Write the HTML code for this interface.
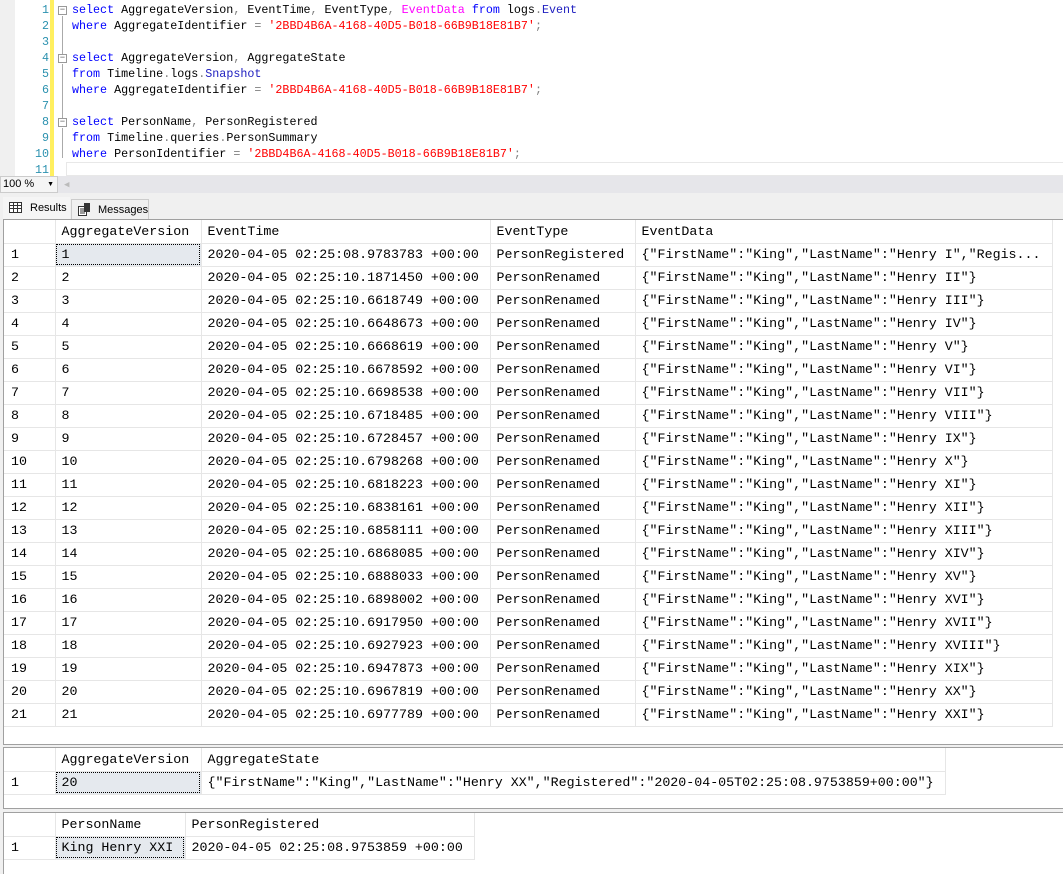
<!DOCTYPE html>
<html><head><meta charset="utf-8"><style>
*{margin:0;padding:0;box-sizing:border-box}
body{width:1063px;height:874px;background:#f0f0f0;position:relative;overflow:hidden;font-family:"Liberation Mono",monospace}
.ed{position:absolute;left:0;top:0;width:1063px;height:176px;background:#fff}
.gut{position:absolute;left:0;top:0;width:15px;height:176px;background:#f0f0f0}
.yb{position:absolute;left:50px;top:0;width:4px;height:176px;background:#ffef5f}
.ln{position:absolute;left:0;width:49px;text-align:right;color:#2b91af;font-size:11.7px;line-height:16px}
.cl{position:absolute;left:72px;font-size:11.7px;line-height:16px;white-space:pre;color:#000}
.k{color:#0000ff}.s{color:#ff0000}.m{color:#ff00ff}.g{color:#808080}.t{color:#2020c0}
.fold{position:absolute;left:58px;width:9px;height:9px;border:1px solid #999;background:#fff;font-size:9px;line-height:7px;text-align:center;color:#555}
.vl{position:absolute;left:62px;width:1px;background:#aaa}
.grid{position:absolute;left:3px;background:#fff;border:1px solid #a0a0a0;border-right:none}
table{border-collapse:collapse;table-layout:fixed;font-size:13.3px}
td{height:23px;border:1px solid #e6e6e6;padding:0 0 0 6px;white-space:nowrap;overflow:hidden;color:#000}
td.n{padding-left:7px}
td.sel{background:#e5e9ee;outline:1px dotted #000;outline-offset:-2px}
tr:first-child td{border-top:none}
td:first-child{border-left:none}
</style></head><body>
<div class="ed">
<div class="gut"></div><div class="yb"></div>
<div style="position:absolute;left:66px;top:162px;width:997px;height:14px;border:1px solid #e8e8e8;border-right:none"></div>
<div class="ln" style="top:2px">1</div><div class="ln" style="top:18px">2</div><div class="ln" style="top:34px">3</div><div class="ln" style="top:50px">4</div><div class="ln" style="top:66px">5</div><div class="ln" style="top:82px">6</div><div class="ln" style="top:98px">7</div><div class="ln" style="top:114px">8</div><div class="ln" style="top:130px">9</div><div class="ln" style="top:146px">10</div><div class="ln" style="top:162px">11</div>
<div class="fold" style="top:6px">−</div><div class="vl" style="top:16px;height:40px"></div>
<div class="fold" style="top:54px">−</div><div class="vl" style="top:64px;height:56px"></div>
<div class="fold" style="top:118px">−</div><div class="vl" style="top:128px;height:30px"></div>
<div class="cl" style="top:2px"><span class="k">select</span> AggregateVersion<span class="g">,</span> EventTime<span class="g">,</span> EventType<span class="g">,</span> <span class="m">EventData</span> <span class="k">from</span> logs<span class="g">.</span><span class="t">Event</span></div>
<div class="cl" style="top:18px"><span class="k">where</span> AggregateIdentifier <span class="g">=</span> <span class="s">'2BBD4B6A-4168-40D5-B018-66B9B18E81B7'</span><span class="g">;</span></div>
<div class="cl" style="top:50px"><span class="k">select</span> AggregateVersion<span class="g">,</span> AggregateState</div>
<div class="cl" style="top:66px"><span class="k">from</span> Timeline<span class="g">.</span>logs<span class="g">.</span><span class="t">Snapshot</span></div>
<div class="cl" style="top:82px"><span class="k">where</span> AggregateIdentifier <span class="g">=</span> <span class="s">'2BBD4B6A-4168-40D5-B018-66B9B18E81B7'</span><span class="g">;</span></div>
<div class="cl" style="top:114px"><span class="k">select</span> PersonName<span class="g">,</span> PersonRegistered</div>
<div class="cl" style="top:130px"><span class="k">from</span> Timeline<span class="g">.</span>queries<span class="g">.</span>PersonSummary</div>
<div class="cl" style="top:146px"><span class="k">where</span> PersonIdentifier <span class="g">=</span> <span class="s">'2BBD4B6A-4168-40D5-B018-66B9B18E81B7'</span><span class="g">;</span></div>
</div>
<div style="position:absolute;left:0;top:176px;width:1063px;height:17px;background:#e6e6ea"></div>
<div style="position:absolute;left:0;top:176px;width:58px;height:17px;background:#f5f5f5;border:1px solid #ccc;font-family:'Liberation Sans',sans-serif;font-size:11px;line-height:15px;padding-left:2px">100 %<span style="position:absolute;right:3px;top:0;font-size:7px">▼</span></div>
<div style="position:absolute;left:64px;top:180px;font-size:9px;color:#bbb">◀</div>
<div style="position:absolute;left:3px;top:197px;width:67px;height:22px;background:#f5f5f5;font-family:'Liberation Sans',sans-serif;font-size:11px;line-height:22px;padding-left:27px">Results
<svg style="position:absolute;left:6px;top:5px" width="13" height="11"><rect x="0.5" y="0.5" width="12" height="10" fill="#fff" stroke="#333"/><path d="M0 3.5H13M0 6.5H13M4.5 0V11M8.5 0V11" stroke="#333"/></svg></div>
<div style="position:absolute;left:71px;top:199px;width:78px;height:20px;border:1px solid #ccc;border-bottom:none;font-family:'Liberation Sans',sans-serif;font-size:11px;line-height:20px;padding-left:26px">Messages
<svg style="position:absolute;left:6px;top:3px" width="14" height="13"><rect x="0.5" y="3.5" width="8" height="9" fill="#fff" stroke="#333"/><rect x="6" y="0" width="6" height="9" fill="#333"/><path d="M2 6H7M2 8H7M2 10H7" stroke="#333"/></svg></div>

<div class="grid" style="top:219px;width:1060px;height:526px">
<table style="width:1048px"><colgroup><col style="width:51px"><col style="width:146px"><col style="width:289px"><col style="width:145px"><col style="width:417px"></colgroup>
<tr><td></td><td>AggregateVersion</td><td>EventTime</td><td>EventType</td><td>EventData</td></tr>
<tr><td class="n">1</td><td class="sel">1</td><td>2020-04-05 02:25:08.9783783 +00:00</td><td>PersonRegistered</td><td>{"FirstName":"King","LastName":"Henry I","Regis...</td></tr>
<tr><td class="n">2</td><td>2</td><td>2020-04-05 02:25:10.1871450 +00:00</td><td>PersonRenamed</td><td>{"FirstName":"King","LastName":"Henry II"}</td></tr>
<tr><td class="n">3</td><td>3</td><td>2020-04-05 02:25:10.6618749 +00:00</td><td>PersonRenamed</td><td>{"FirstName":"King","LastName":"Henry III"}</td></tr>
<tr><td class="n">4</td><td>4</td><td>2020-04-05 02:25:10.6648673 +00:00</td><td>PersonRenamed</td><td>{"FirstName":"King","LastName":"Henry IV"}</td></tr>
<tr><td class="n">5</td><td>5</td><td>2020-04-05 02:25:10.6668619 +00:00</td><td>PersonRenamed</td><td>{"FirstName":"King","LastName":"Henry V"}</td></tr>
<tr><td class="n">6</td><td>6</td><td>2020-04-05 02:25:10.6678592 +00:00</td><td>PersonRenamed</td><td>{"FirstName":"King","LastName":"Henry VI"}</td></tr>
<tr><td class="n">7</td><td>7</td><td>2020-04-05 02:25:10.6698538 +00:00</td><td>PersonRenamed</td><td>{"FirstName":"King","LastName":"Henry VII"}</td></tr>
<tr><td class="n">8</td><td>8</td><td>2020-04-05 02:25:10.6718485 +00:00</td><td>PersonRenamed</td><td>{"FirstName":"King","LastName":"Henry VIII"}</td></tr>
<tr><td class="n">9</td><td>9</td><td>2020-04-05 02:25:10.6728457 +00:00</td><td>PersonRenamed</td><td>{"FirstName":"King","LastName":"Henry IX"}</td></tr>
<tr><td class="n">10</td><td>10</td><td>2020-04-05 02:25:10.6798268 +00:00</td><td>PersonRenamed</td><td>{"FirstName":"King","LastName":"Henry X"}</td></tr>
<tr><td class="n">11</td><td>11</td><td>2020-04-05 02:25:10.6818223 +00:00</td><td>PersonRenamed</td><td>{"FirstName":"King","LastName":"Henry XI"}</td></tr>
<tr><td class="n">12</td><td>12</td><td>2020-04-05 02:25:10.6838161 +00:00</td><td>PersonRenamed</td><td>{"FirstName":"King","LastName":"Henry XII"}</td></tr>
<tr><td class="n">13</td><td>13</td><td>2020-04-05 02:25:10.6858111 +00:00</td><td>PersonRenamed</td><td>{"FirstName":"King","LastName":"Henry XIII"}</td></tr>
<tr><td class="n">14</td><td>14</td><td>2020-04-05 02:25:10.6868085 +00:00</td><td>PersonRenamed</td><td>{"FirstName":"King","LastName":"Henry XIV"}</td></tr>
<tr><td class="n">15</td><td>15</td><td>2020-04-05 02:25:10.6888033 +00:00</td><td>PersonRenamed</td><td>{"FirstName":"King","LastName":"Henry XV"}</td></tr>
<tr><td class="n">16</td><td>16</td><td>2020-04-05 02:25:10.6898002 +00:00</td><td>PersonRenamed</td><td>{"FirstName":"King","LastName":"Henry XVI"}</td></tr>
<tr><td class="n">17</td><td>17</td><td>2020-04-05 02:25:10.6917950 +00:00</td><td>PersonRenamed</td><td>{"FirstName":"King","LastName":"Henry XVII"}</td></tr>
<tr><td class="n">18</td><td>18</td><td>2020-04-05 02:25:10.6927923 +00:00</td><td>PersonRenamed</td><td>{"FirstName":"King","LastName":"Henry XVIII"}</td></tr>
<tr><td class="n">19</td><td>19</td><td>2020-04-05 02:25:10.6947873 +00:00</td><td>PersonRenamed</td><td>{"FirstName":"King","LastName":"Henry XIX"}</td></tr>
<tr><td class="n">20</td><td>20</td><td>2020-04-05 02:25:10.6967819 +00:00</td><td>PersonRenamed</td><td>{"FirstName":"King","LastName":"Henry XX"}</td></tr>
<tr><td class="n">21</td><td>21</td><td>2020-04-05 02:25:10.6977789 +00:00</td><td>PersonRenamed</td><td>{"FirstName":"King","LastName":"Henry XXI"}</td></tr>
</table></div>

<div class="grid" style="top:747px;width:1060px;height:62px">
<table style="width:941px"><colgroup><col style="width:51px"><col style="width:146px"><col style="width:744px"></colgroup>
<tr><td></td><td>AggregateVersion</td><td>AggregateState</td></tr>
<tr><td class="n">1</td><td class="sel">20</td><td>{"FirstName":"King","LastName":"Henry XX","Registered":"2020-04-05T02:25:08.9753859+00:00"}</td></tr>
</table></div>

<div class="grid" style="top:812px;width:1060px;height:62px;border-bottom:none">
<table style="width:470px"><colgroup><col style="width:51px"><col style="width:130px"><col style="width:289px"></colgroup>
<tr><td></td><td>PersonName</td><td>PersonRegistered</td></tr>
<tr><td class="n">1</td><td class="sel">King Henry XXI</td><td>2020-04-05 02:25:08.9753859 +00:00</td></tr>
</table></div>
</body></html>
